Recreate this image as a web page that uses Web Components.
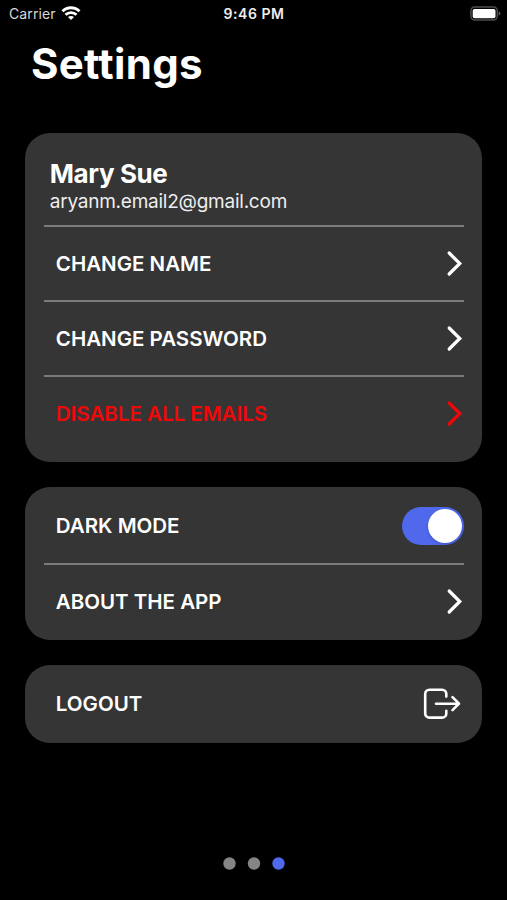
<!DOCTYPE html>
<html lang="en">
<head>
<meta charset="UTF-8">
<title>Settings</title>
<style>
    :root {
        --background: #000;
        --card: #353535;
        --divider: #7b7b7b;
        --text: #fff;
        --danger: #f00808;
        --accent: #4f68ec;
    }
    body {
        margin: 0;
        background: var(--background);
        color: var(--text);
        font-family: Inter, "Liberation Sans", sans-serif;
    }
</style>
</head>
<body>
<settings-screen></settings-screen>

<script>
class StatusBar extends HTMLElement {
    constructor() {
        super();
        this.attachShadow({ mode: 'open' });
    }

    connectedCallback() {
        this.shadowRoot.innerHTML = `
            <style>
                :host {
                    display: grid;
                    grid-template-columns: 1fr auto 1fr;
                    align-items: center;
                    height: 27px;
                    padding: 0 6px 0 9px;
                    font-size: 14px;
                    line-height: 27px;
                    color: #eee;
                }
                .left {
                    display: flex;
                    align-items: center;
                    gap: 5px;
                    letter-spacing: 0.1px;
                    color: #d8d8d8;
                }
                .time {
                    font-weight: 600;
                    letter-spacing: 0.55px;
                    margin-left: -2px;
                }
                .battery {
                    justify-self: end;
                }
                svg {
                    display: block;
                }
            </style>
            <div class="left">
                <span>Carrier</span>
                <svg width="20" height="15" viewBox="0 0 20 15" fill="none" stroke="#fff" stroke-width="2.8">
                    <path d="M1.5 5.2C6.1.6 13.9.6 18.5 5.2"/>
                    <path d="M4.5 8.700C7.500 5.800 12.500 5.800 15.500 8.700"/>
                    <path d="M10 14L7 11.100C8.700 9.600 11.300 9.600 13 11.100Z" fill="#fff" stroke="none"/>
                </svg>
            </div>
            <span class="time"><slot></slot></span>
            <svg class="battery" width="31" height="15" viewBox="0 0 31 15">
                <rect x="0.9" y="0.9" width="26.4" height="13.2" rx="4" fill="none" stroke="#4d4d4d" stroke-width="1.5"/>
                <rect x="2.7" y="2.9" width="22.8" height="9.4" rx="1.8" fill="#fff"/>
                <path d="M28.6 5.3q2 .8 2 2.2t-2 2.2z" fill="#555"/>
            </svg>
        `;
    }
}

class SettingsCard extends HTMLElement {
    constructor() {
        super();
        this.attachShadow({ mode: 'open' });
    }

    connectedCallback() {
        this.shadowRoot.innerHTML = `
            <style>
                :host {
                    display: flex;
                    flex-direction: column;
                    box-sizing: border-box;
                    padding: 0 18.4px;
                    border-radius: 25px;
                    background: var(--card);
                }
            </style>
            <slot></slot>
        `;
    }
}

class UserInfo extends HTMLElement {
    constructor() {
        super();
        this.attachShadow({ mode: 'open' });
    }

    connectedCallback() {
        this.shadowRoot.innerHTML = `
            <style>
                :host {
                    display: block;
                    box-sizing: border-box;
                    height: 92px;
                    padding: 25px 6px 0;
                }
                .name {
                    font-size: 26px;
                    font-weight: 700;
                    line-height: 32px;
                    letter-spacing: -0.4px;
                }
                .email {
                    font-size: 19px;
                    line-height: 24px;
                    letter-spacing: -0.24px;
                    color: #eee;
                }
            </style>
            <div class="name"><slot name="name"></slot></div>
            <div class="email"><slot name="email"></slot></div>
        `;
    }
}

class SettingsRow extends HTMLElement {
    constructor() {
        super();
        this.attachShadow({ mode: 'open' });
    }

    connectedCallback() {
        this.shadowRoot.innerHTML = `
            <style>
                :host {
                    display: flex;
                    align-items: center;
                    justify-content: space-between;
                    box-sizing: border-box;
                    height: 75px;
                    padding-left: 12px;
                    font-size: 20.5px;
                    font-weight: 600;
                    line-height: 24px;
                }
                :host([divided]) {
                    border-top: 2px solid var(--divider);
                }
                :host([danger]) {
                    color: var(--danger);
                }
                .label {
                    padding-top: 1px;
                }
                svg {
                    display: block;
                }
            </style>
            <span class="label"><slot></slot></span>
            <slot name="action">
                <svg width="18" height="28" viewBox="0 0 18 28" fill="none" stroke="currentColor" stroke-width="3.2" stroke-linecap="round">
                    <path d="M3.2 4L13.8 14.5L3.2 25"/>
                </svg>
            </slot>
        `;
    }
}

class ToggleSwitch extends HTMLElement {
    constructor() {
        super();
        this.attachShadow({ mode: 'open' });
    }

    connectedCallback() {
        this.shadowRoot.innerHTML = `
            <style>
                :host {
                    display: flex;
                    justify-content: flex-end;
                    box-sizing: border-box;
                    width: 62.5px;
                    height: 38px;
                    margin-top: 2px;
                    padding: 2px;
                    border-radius: 20px;
                    background: var(--accent);
                }
                .thumb {
                    width: 34px;
                    height: 34px;
                    border-radius: 50%;
                    background: #fff;
                    box-shadow: 0 1px 3px rgba(0, 0, 0, 0.2);
                }
            </style>
            <div class="thumb"></div>
        `;
    }
}

class LogoutIcon extends HTMLElement {
    constructor() {
        super();
        this.attachShadow({ mode: 'open' });
    }

    connectedCallback() {
        this.shadowRoot.innerHTML = `
            <style>
                :host {
                    display: block;
                    margin: 2px 2.2px 0 0;
                }
                svg {
                    display: block;
                }
            </style>
            <svg width="40" height="34" viewBox="0 0 40 34" fill="none" stroke="#fff" stroke-width="2.6" stroke-linecap="round" stroke-linejoin="round">
                <path d="M24.3 9.6V7a4.2 4.2 0 0 0-4.2-4.2H7.4A4.2 4.2 0 0 0 3.2 7v19.4a4.2 4.2 0 0 0 4.2 4.2h12.7a4.2 4.2 0 0 0 4.2-4.2v-2.6"/>
                <path d="M14 16.7H37M30.5 10.2L37 16.7L30.5 23.2"/>
            </svg>
        `;
    }
}

class PageDots extends HTMLElement {
    constructor() {
        super();
        this.attachShadow({ mode: 'open' });
    }

    connectedCallback() {
        const count = Number(this.getAttribute('count'));
        const active = Number(this.getAttribute('active'));
        let dots = '';
        for (let i = 0; i < count; i++) {
            const fill = i === active ? 'var(--accent)' : '#858585';
            dots += `<circle cx="${6.5 + i * 24.5}" cy="6.5" r="6.2" fill="${fill}"/>`;
        }
        this.shadowRoot.innerHTML = `
            <style>
                :host {
                    display: flex;
                    justify-content: center;
                }
            </style>
            <svg width="${13 + (count - 1) * 24.5}" height="13">${dots}</svg>
        `;
    }
}

class SettingsScreen extends HTMLElement {
    constructor() {
        super();
        this.attachShadow({ mode: 'open' });
    }

    connectedCallback() {
        this.shadowRoot.innerHTML = `
            <style>
                :host {
                    display: flex;
                    flex-direction: column;
                    box-sizing: border-box;
                    height: 900px;
                    padding-bottom: 30px;
                    overflow: hidden;
                }
                h1 {
                    margin: 12px 0 0 31px;
                    font-size: 42px;
                    font-weight: 700;
                    line-height: 50px;
                    letter-spacing: 0.3px;
                }
                .cards {
                    display: flex;
                    flex-direction: column;
                    gap: 25px;
                    margin: 43.5px 24.6px 0 25.4px;
                }
                .account {
                    height: 329px;
                }
                .app {
                    height: 153px;
                    padding-top: 1px;
                }
                .session {
                    height: 78px;
                    padding-top: 1px;
                }
                page-dots {
                    margin-top: auto;
                }
            </style>
            <status-bar>9:46 PM</status-bar>
            <h1>Settings</h1>
            <div class="cards">
                <settings-card class="account">
                    <user-info>
                        <span slot="name">Mary Sue</span>
                        <span slot="email">aryanm.email2@gmail.com</span>
                    </user-info>
                    <settings-row divided>CHANGE NAME</settings-row>
                    <settings-row divided>CHANGE PASSWORD</settings-row>
                    <settings-row divided danger>DISABLE ALL EMAILS</settings-row>
                </settings-card>
                <settings-card class="app">
                    <settings-row>DARK MODE<toggle-switch slot="action"></toggle-switch></settings-row>
                    <settings-row divided>ABOUT THE APP</settings-row>
                </settings-card>
                <settings-card class="session">
                    <settings-row>LOGOUT<logout-icon slot="action"></logout-icon></settings-row>
                </settings-card>
            </div>
            <page-dots count="3" active="2"></page-dots>
        `;
    }
}

customElements.define('status-bar', StatusBar);
customElements.define('settings-card', SettingsCard);
customElements.define('user-info', UserInfo);
customElements.define('settings-row', SettingsRow);
customElements.define('toggle-switch', ToggleSwitch);
customElements.define('logout-icon', LogoutIcon);
customElements.define('page-dots', PageDots);
customElements.define('settings-screen', SettingsScreen);
</script>
</body>
</html>
